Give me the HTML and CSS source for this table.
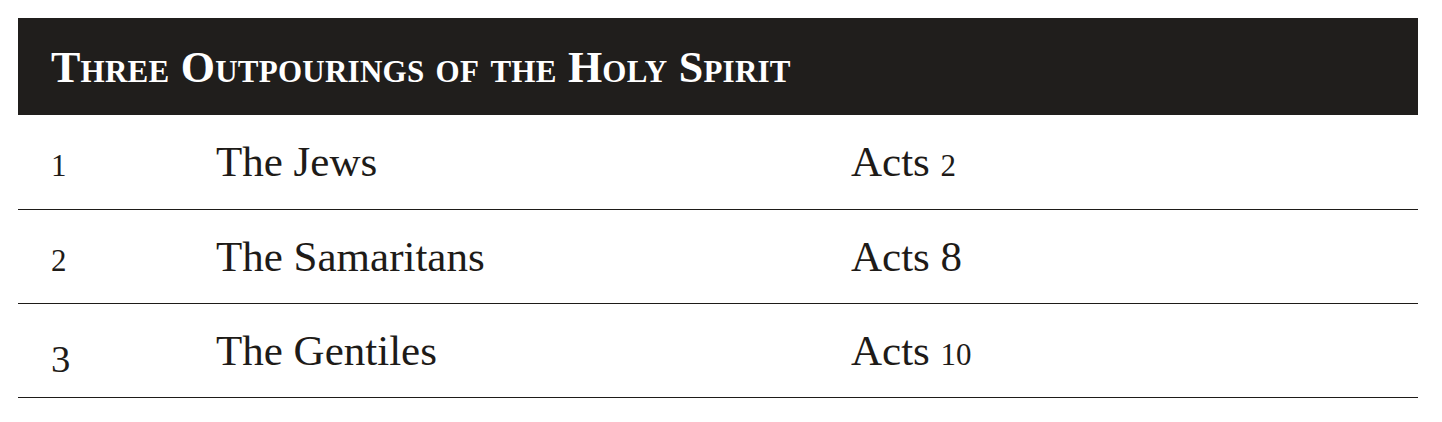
FILE: index.html
```html
<!DOCTYPE html>
<html lang="en">
<head>
<meta charset="utf-8">
<title>Three Outpourings of the Holy Spirit</title>
<link rel="stylesheet" href="styles.css">
</head>
<body>
<table class="outpourings">
  <colgroup>
    <col class="c-num">
    <col class="c-group">
    <col class="c-ref">
  </colgroup>
  <thead>
    <tr><th colspan="3" class="title">Three Outpourings of the Holy Spirit</th></tr>
  </thead>
  <tbody>
    <tr>
      <td class="num"><span class="osf">1</span></td>
      <td class="group">The Jews</td>
      <td class="ref">Acts <span class="osf">2</span></td>
    </tr>
    <tr>
      <td class="num"><span class="osf">2</span></td>
      <td class="group">The Samaritans</td>
      <td class="ref">Acts 8</td>
    </tr>
    <tr>
      <td class="num"><span class="osf-desc">3</span></td>
      <td class="group">The Gentiles</td>
      <td class="ref">Acts <span class="osf">10</span></td>
    </tr>
  </tbody>
</table>
</body>
</html>
```

FILE: styles.css
```css
html, body {
  margin: 0;
  padding: 0;
  background: #ffffff;
}
body {
  padding: 18px 24px 0 18px;
  font-family: "Liberation Serif", "DejaVu Serif", serif;
  color: #1e1b18;
}
.outpourings {
  width: 1400px;
  border-collapse: collapse;
  table-layout: fixed;
}
.c-num { width: 165px; }
.c-group { width: 635px; }
.c-ref { width: 600px; }
.title {
  background: #201e1c;
  color: #ffffff;
  text-align: left;
  font-weight: bold;
  font-variant: small-caps;
  font-size: 44px;
  letter-spacing: 0.25px;
  height: 97px;
  padding: 2px 0 0 33px;
  box-sizing: border-box;
}
.outpourings td {
  height: 94px;
  padding: 0 0 0 33px;
  border-bottom: 1px solid #1e1b18;
  font-size: 43px;
  vertical-align: middle;
  box-sizing: border-box;
}
.osf {
  font-size: 0.72em;
}
.osf-desc {
  font-size: 0.9em;
  position: relative;
  top: 0.2em;
}
```
